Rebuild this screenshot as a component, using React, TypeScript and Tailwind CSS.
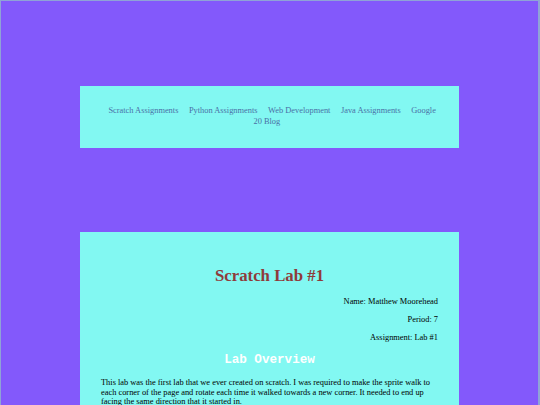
export default function App() {
  const links = ['Scratch Assignments', 'Python Assignments', 'Web Development', 'Java Assignments', 'Google 20 Blog'];

  return (
    <div className="h-[405px] overflow-hidden bg-[#8359fb] border-t border-l border-r-2 border-[#8fa3d6] font-['Liberation_Serif',serif]">
      <nav className="mx-[79px] mt-[85px] bg-[#82f8f2] px-[18px] pt-[19px] pb-[21px] text-center text-[8.4px] leading-[11px] text-[#4a70a6]">
        {links.map((l) => (
          <a key={l} href="#" className="mx-[5.25px]">
            {l}
          </a>
        ))}
      </nav>

      <div className="mx-[79px] mt-[84px] bg-[#82f8f2] px-[21px] pt-[23px] pb-[30px]">
        <h1 className="my-[11px] text-center text-[16.8px] font-bold leading-[19.5px] text-[#8f3b3b]">Scratch Lab #1</h1>
        <div className="text-right text-[8.4px] leading-[9.7px] text-black">
          <p className="my-[8.4px]">Name: Matthew Moorehead</p>
          <p className="my-[8.4px]">Period: 7</p>
          <p className="my-[8.4px]">Assignment: Lab #1</p>
        </div>
        <h2 className="my-[10.5px] text-center font-['Liberation_Mono',monospace] text-[12.6px] font-bold leading-[14.5px] text-white">
          Lab Overview
        </h2>
        <p className="text-[8.4px] leading-[9.7px] text-black">
          This lab was the first lab that we ever created on scratch. I was required to make the sprite walk to each corner of the page and rotate each time it walked towards a new corner. It needed to end up facing the same direction that it started in.
        </p>
      </div>
    </div>
  );
}
